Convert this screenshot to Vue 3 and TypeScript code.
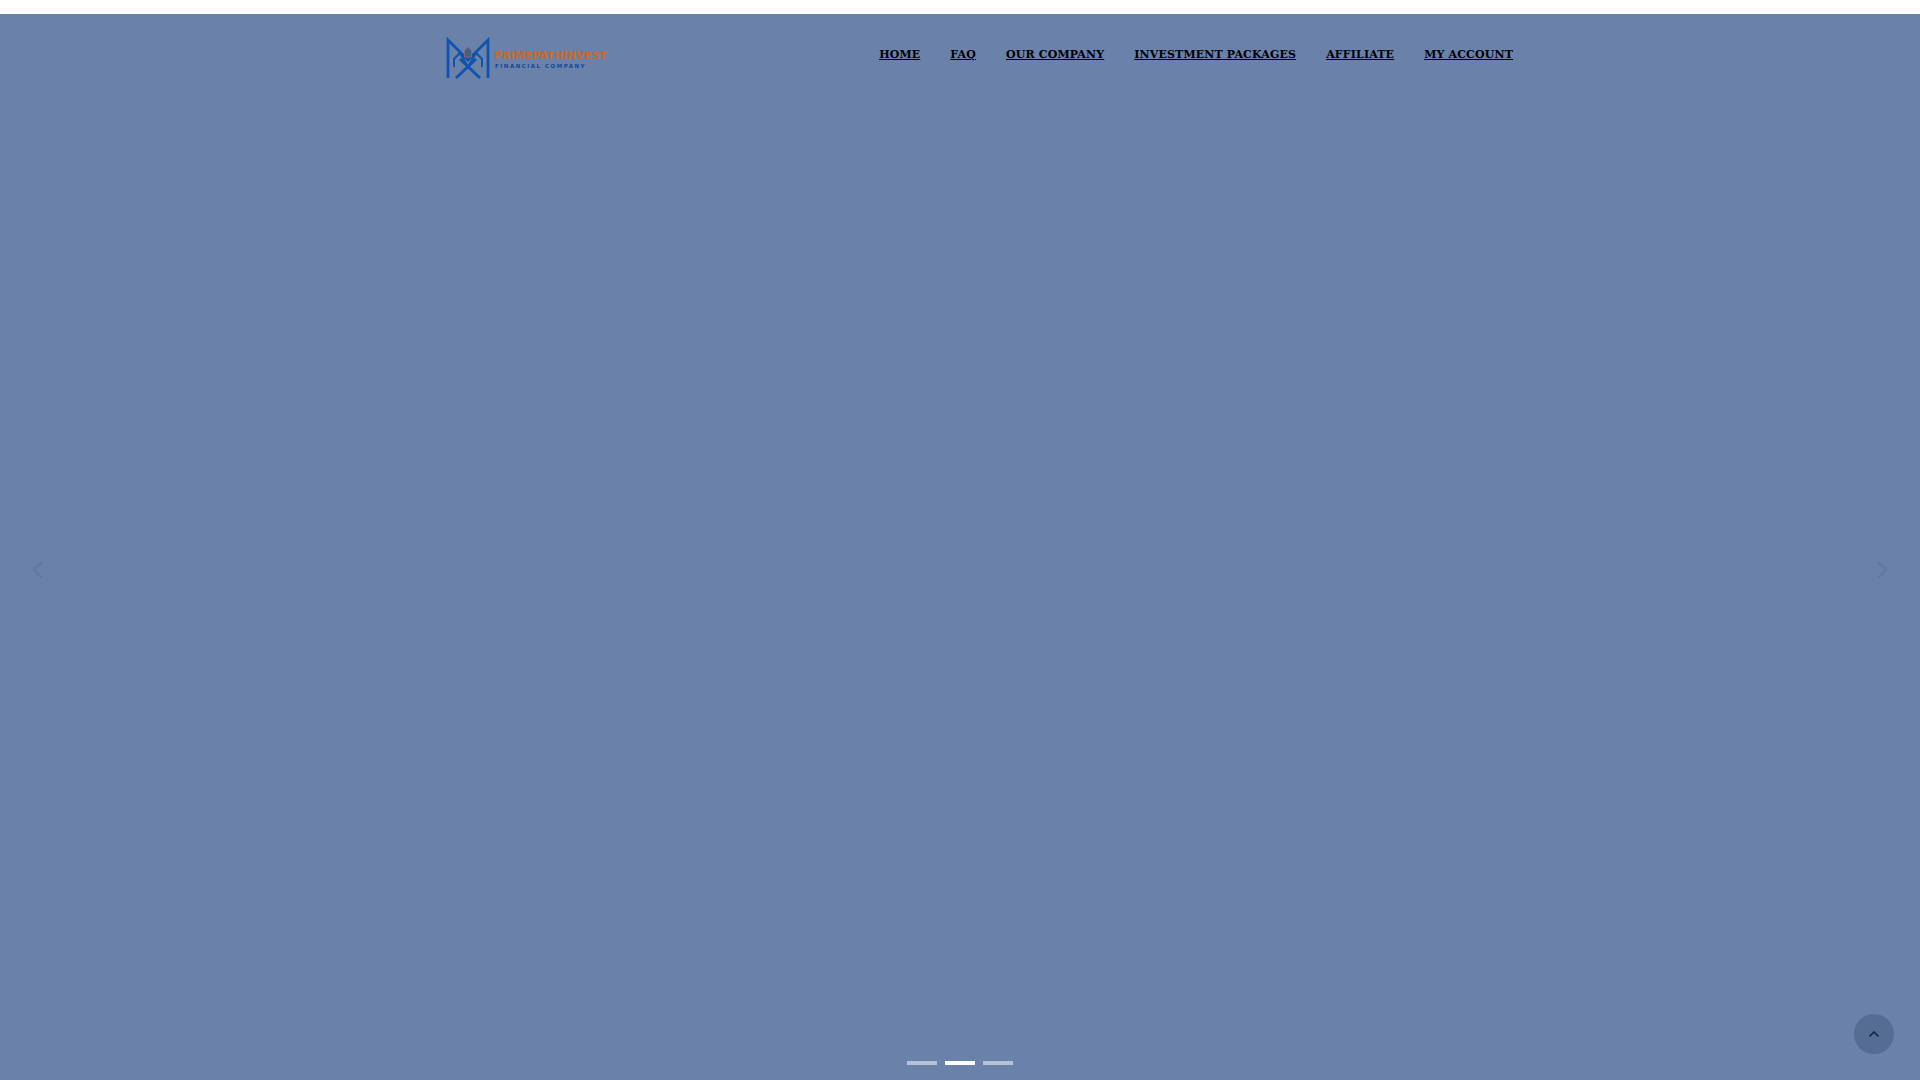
<script setup lang="ts">
const navItems = ['Home', 'FAQ', 'Our Company', 'Investment Packages', 'Affiliate', 'My Account']
const slides = [0, 1, 2]
const activeSlide = 1
</script>

<template>
  <div class="page">
    <div class="top-strip"></div>
    <section class="hero">
      <header class="header">
        <a class="logo" href="#">
          <svg class="logo-mark" width="44" height="42" viewBox="0 0 44 42" fill="none" stroke="#0f52b0" stroke-width="2.8">
            <path d="M2 41V3L22 23L42 3V41" />
            <path d="M8 30V22L14 16L22 30" stroke-width="2" />
            <path d="M36 30V22L30 16L22 30" stroke-width="2" />
            <path d="M10 41L30 22M34 41L14 22" />
            <path d="M22 10L18.5 14V20H25.5V14Z" fill="#3f5f8c" stroke="#8a6a5a" stroke-width="1" />
          </svg>
          <div class="logo-text">
            <span class="logo-name">PRIMEPATHINVEST</span>
            <span class="logo-sub">FINANCIAL COMPANY</span>
          </div>
        </a>
        <nav class="nav">
          <a v-for="item in navItems" :key="item" href="#">{{ item }}</a>
        </nav>
      </header>

      <svg class="arrow arrow-prev" width="14" height="22" viewBox="0 0 14 22" fill="none">
        <path d="M11 3L3 11L11 19" />
      </svg>
      <svg class="arrow arrow-next" width="14" height="22" viewBox="0 0 14 22" fill="none">
        <path d="M3 3L11 11L3 19" />
      </svg>

      <div class="dots">
        <span v-for="s in slides" :key="s" class="dot" :class="{ active: s === activeSlide }"></span>
      </div>

      <button class="to-top" aria-label="Back to top">
        <svg width="12" height="8" viewBox="0 0 12 8" fill="none">
          <path d="M1.5 6.5L6 2L10.5 6.5" />
        </svg>
      </button>
    </section>
  </div>
</template>

<style scoped>
.page {
  height: 1080px;
  display: flex;
  flex-direction: column;
  background: #fff;
}

.top-strip {
  height: 14px;
  flex-shrink: 0;
}

.hero {
  position: relative;
  flex: 1;
  background: #6a82a9;
}

.header {
  width: 1110px;
  margin: 0 auto;
  display: flex;
  justify-content: space-between;
  align-items: flex-start;
}

.logo {
  display: flex;
  align-items: center;
  gap: 4px;
  margin: 23px 0 0 41px;
  text-decoration: none;
}

.logo-mark {
  filter: blur(0.4px);
}

.logo-text {
  display: flex;
  flex-direction: column;
  gap: 1px;
  font-family: 'DejaVu Sans', 'Liberation Sans', sans-serif;
  font-weight: 700;
  margin-top: 2px;
}

.logo-name {
  font-size: 10.8px;
  line-height: 13px;
  color: #c7682a;
}

.logo-sub {
  font-size: 5.5px;
  line-height: 7px;
  color: #14469a;
  letter-spacing: 1.5px;
  margin-left: 1px;
}

.nav {
  display: flex;
  gap: 30px;
  margin: 33px 2px 0 0;
  font-family: 'DejaVu Serif', 'Liberation Serif', serif;
  font-size: 11px;
  font-weight: 700;
  line-height: 16px;
  letter-spacing: 0.15px;
  text-transform: uppercase;
}

.nav a {
  color: #000;
  text-decoration: underline;
}

.arrow {
  position: absolute;
  top: 545px;
  opacity: 0.75;
}

.arrow path {
  stroke: #5f779e;
  stroke-width: 2.5;
}

.arrow-prev {
  left: 31px;
}

.arrow-next {
  right: 31px;
}

.dots {
  position: absolute;
  left: 0;
  right: 0;
  bottom: 15px;
  display: flex;
  justify-content: center;
  gap: 8px;
}

.dot {
  width: 30px;
  height: 4px;
  background: #fff;
  opacity: 0.5;
}

.dot.active {
  opacity: 1;
}

.to-top {
  position: absolute;
  right: 26px;
  bottom: 26px;
  width: 40px;
  height: 40px;
  padding: 0;
  border: none;
  border-radius: 50%;
  background: #566d93;
  display: flex;
  align-items: center;
  justify-content: center;
}

.to-top path {
  stroke: #10264f;
  stroke-width: 1.6;
}
</style>

<style>
html,
body {
  margin: 0;
  overflow: hidden;
}
</style>
